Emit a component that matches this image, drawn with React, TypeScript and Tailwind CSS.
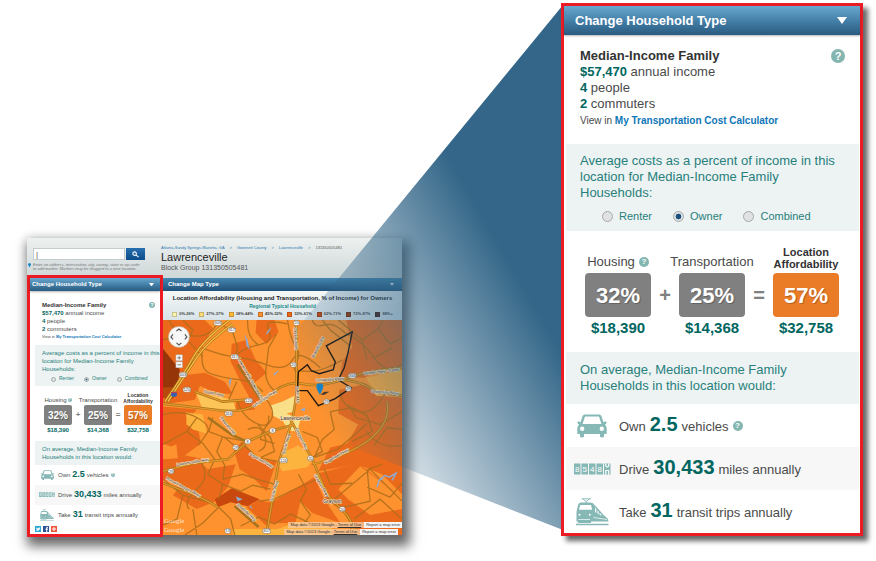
import React from "react";

type Styles = Record<
  | "frame" | "header" | "title" | "caret" | "body" | "info" | "infoText" | "view" | "help" | "smallHelp"
  | "shade" | "para" | "radios" | "radioLabel" | "radio" | "equation" | "labels" | "label" | "strongLabel"
  | "col" | "box" | "op" | "amount" | "shade2" | "row" | "iconCell" | "fact" | "num" | "car" | "odo" | "train",
  string
>;

const large: Styles = {
  frame: "border-[3px] shadow-[5px_5px_5px_rgba(0,0,0,0.6)]",
  header: "h-[29px] pl-[11px] pr-[13px]",
  title: "text-[13px]",
  caret: "w-[10px]",
  body: "pl-[2px] pr-px",
  info: "pt-[13px] pb-[14px] pl-[14px] pr-[14px]",
  infoText: "text-[13px] leading-4",
  view: "text-[10px] leading-[18px]",
  help: "size-[14px] text-[11px] mt-px",
  smallHelp: "size-[10px] text-[8px]",
  shade: "pt-[9px] pb-[7px] pl-[14px]",
  para: "text-[13px] leading-4",
  radios: "mt-[7px] h-4 pl-[22px] gap-[21px]",
  radioLabel: "gap-[6px] text-[11px]",
  radio: "size-[11px] border",
  equation: "pl-[19px] pb-4",
  labels: "h-[42px] pb-[3px]",
  label: "text-[13px] leading-4 gap-1",
  strongLabel: "text-[11px] leading-3",
  col: "w-[66px]",
  box: "h-[44px] w-[66px] rounded-[4px] text-[22px]",
  op: "w-[28px] h-[44px] text-[20px]",
  amount: "mt-[3px] text-[15px] leading-4",
  shade2: "py-[10px] pl-[14px]",
  row: "h-[43px] pl-[6px] gap-[7px]",
  iconCell: "w-10",
  fact: "text-[13px] gap-1",
  num: "text-[20px]",
  car: "w-[30px]",
  odo: "w-[37px]",
  train: "w-[33px]",
};

const small: Styles = {
  frame: "border-[3px]",
  header: "h-[13px] pl-[2px] pr-[6px]",
  title: "text-[6px]",
  caret: "w-[5px]",
  body: "pl-[5px]",
  info: "pt-[10px] pb-1 pl-[7px] pr-[5px]",
  infoText: "text-[6px] leading-[8px]",
  view: "text-[4px] leading-[8px]",
  help: "size-[6px] text-[5px] mt-px",
  smallHelp: "size-[4px] text-[3px]",
  shade: "pt-1 pb-[3px] pl-[7px]",
  para: "text-[6px] leading-[8px]",
  radios: "mt-[2px] h-[8px] pl-[9px] gap-[10px]",
  radioLabel: "gap-[3px] text-[5px]",
  radio: "size-[5px] border",
  equation: "pl-[9px] pb-[7px]",
  labels: "h-[19px] pb-px",
  label: "text-[6px] leading-[8px] gap-px",
  strongLabel: "text-[5px] leading-[6px]",
  col: "w-[28px]",
  box: "h-[20px] w-[28px] rounded-[2px] text-[10px]",
  op: "w-[12px] h-[20px] text-[8px]",
  amount: "mt-px text-[6px] leading-[8px]",
  shade2: "py-1 pl-[7px]",
  row: "h-[20px] pl-1 gap-[3px]",
  iconCell: "w-4",
  fact: "text-[6px] gap-[2px]",
  num: "text-[9px]",
  car: "w-[13px]",
  odo: "w-[16px]",
  train: "w-[14px]",
};

function Help({ className }: { className: string }) {
  return (
    <button
      type="button"
      aria-label="Help"
      className={`flex shrink-0 items-center justify-center rounded-full bg-[#83b5b1] font-bold leading-none text-white ${className}`}
    >
      ?
    </button>
  );
}

function Caret({ className }: { className: string }) {
  return (
    <svg viewBox="0 0 10 7" className={className} aria-hidden="true">
      <path d="M0 0H10L5 7Z" fill="#fff" />
    </svg>
  );
}

function Car({ className }: { className: string }) {
  return (
    <svg viewBox="0 0 30 24" className={className} fill="#86b8b5" aria-hidden="true">
      <path
        fillRule="evenodd"
        d="M8 .5H22Q24 .5 24.6 2.4L26.4 8.3Q27 7.5 28.6 7.6Q30 8 29.6 9.2L28 10.5Q29.7 12.5 29.7 15V20H27V22.5Q26.8 23.6 25 23.6Q23.2 23.6 23 22.5V20H7V22.5Q6.8 23.6 5 23.6Q3.200 23.600 3 22.500V20H.3V15Q.3 12.500 2 10.500L.4 9.200Q0 8 1.400 7.600Q3 7.500 3.600 8.300L5.400 2.400Q6 .5 8 .5ZM8 2.500L5.600 10H24.400L22 2.500ZM5.200 12.500A2.200 2.200 0 1 0 5.200 16.900A2.200 2.200 0 1 0 5.200 12.500ZM24.800 12.500A2.200 2.200 0 1 0 24.800 16.900A2.200 2.200 0 1 0 24.800 12.500Z"
      />
    </svg>
  );
}

function Odometer({ className }: { className: string }) {
  return (
    <svg viewBox="0 0 37 12" className={className} aria-hidden="true">
      {["8", "5", "4", "8"].map((d, i) => (
        <g key={i}>
          <rect x={i * 7.5} y="0.5" width="6.500" height="11" fill="#86b8b5" />
          <text x={i * 7.5 + 3.25} y="9" textAnchor="middle" fontSize="8" fill="#fff" fontFamily="Liberation Sans, sans-serif">
            {d}
          </text>
        </g>
      ))}
      <rect x="30" y="0.5" width="6.500" height="11" fill="#86b8b5" />
      <path d="M31.800.5V3Q33.200 5 34.700 3V.5M31.800 11.500V7.500H34.700V11.500" fill="none" stroke="#fff" strokeWidth="1.200" />
    </svg>
  );
}

function Train({ className }: { className: string }) {
  return (
    <svg viewBox="0 0 33 28" className={className} aria-hidden="true">
      <path d="M5.500 .8H15M7 1L10.200 3.500L13.500 1M10.200 3V5" fill="none" stroke="#86b8b5" strokeWidth=".9" />
      <path d="M5 4.500H14.500Q17.500 4.500 18.500 7L25 14Q27 17 30 19Q32.500 20.500 32.500 23.500H.5V14L1.800 8Q2.300 4.500 5 4.500Z" fill="#86b8b5" />
      <path d="M4.300 7H15L16.200 11.800H2.900Z" fill="#fff" />
      <path d="M19 9.500L20.300 11V14.800L19 14.200ZM21.400 12.200L22.600 13.500V16.200L21.400 15.600ZM23.600 14.600L25.800 17.500L23.600 17Z" fill="#fff" />
      <circle cx="3.500" cy="16.800" r="1" fill="#fff" />
      <circle cx="13.800" cy="16.800" r="1" fill="#fff" />
      <path d="M17.500 19.500L31 21.500M2.500 21.500H14" stroke="#fff" strokeWidth=".7" />
      <path d="M2 23H15V25H2ZM0 25.800H32.500V27.300H0Z" fill="#86b8b5" />
    </svg>
  );
}

function HouseholdPanel({ s, group, social = false }: { s: Styles; group: string; social?: boolean }) {
  const factor = (label: React.ReactNode, value: string, amount: string, accent = false) => (
    <div className={`flex flex-col items-center whitespace-nowrap ${s.col}`}>
      <div className={`flex items-end justify-center ${s.labels}`}>{label}</div>
      <div
        className={`flex items-center justify-center font-bold text-white [text-shadow:1px_1px_1px_rgba(0,0,0,0.25)] ${accent ? "bg-[#ea7c27]" : "bg-[#808080]"} ${s.box}`}
      >
        {value}
      </div>
      <div className={`font-bold text-[#00665f] ${s.amount}`}>{amount}</div>
    </div>
  );
  const operator = (sign: string) => (
    <div className={`flex items-center justify-center self-start font-bold text-[#808080] ${s.op}`}>{sign}</div>
  );
  const fact = (icon: React.ReactNode, before: string, n: string, after: string, shaded = false, help = false) => (
    <li className={`flex items-center ${s.row} ${shaded ? "bg-[#f7f7f7]" : ""}`}>
      <span className={`flex shrink-0 justify-center ${s.iconCell}`}>{icon}</span>
      <span className={`flex items-baseline whitespace-nowrap ${s.fact}`}>
        {before} <b className={`leading-none text-[#00665f] ${s.num}`}>{n}</b> {after}
        {help && (
          <span className="self-center">
            <Help className={s.smallHelp} />
          </span>
        )}
      </span>
    </li>
  );

  return (
    <section className={`border-[#ed1c24] bg-white text-[#4a4a4a] ${s.frame}`}>
      <button
        type="button"
        className={`flex w-full items-center justify-between bg-linear-to-b from-[#6ba8cf] via-[#4480a8] to-[#2b5b80] shadow-[0_1px_2px_rgba(0,0,0,0.3)] ${s.header}`}
      >
        <span className={`whitespace-nowrap font-bold text-white ${s.title}`}>Change Household Type</span>
        <Caret className={s.caret} />
      </button>
      <div className={s.body}>
        <div className={`flex items-start justify-between ${s.info}`}>
          <div className={`whitespace-nowrap ${s.infoText}`}>
            <h2 className="font-bold text-[#333]">Median-Income Family</h2>
            <p><b className="text-[#00665f]">$57,470</b> annual income</p>
            <p><b className="text-[#00665f]">4</b> people</p>
            <p><b className="text-[#00665f]">2</b> commuters</p>
            <p className={s.view}>
              View in <a href="#calculator" className="font-bold text-[#0f76b8]">My Transportation Cost Calculator</a>
            </p>
          </div>
          <Help className={s.help} />
        </div>

        <fieldset className={`bg-[#edf3f3] text-[#27807b] ${s.shade}`}>
          <p className={`whitespace-nowrap ${s.para}`}>
            Average costs as a percent of income in this<br />
            location for Median-Income Family<br />
            Households:
          </p>
          <div className={`flex items-center ${s.radios}`}>
            {["Renter", "Owner", "Combined"].map((name) => (
              <label key={name} className={`flex items-center ${s.radioLabel}`}>
                <input
                  type="radio"
                  name={group}
                  defaultChecked={name === "Owner"}
                  className={`appearance-none rounded-full border-[#a5a9aa] bg-[#dfe1e2] checked:bg-[radial-gradient(circle,#1b4f7c_40%,#dfe1e2_50%)] ${s.radio}`}
                />
                {name}
              </label>
            ))}
          </div>
        </fieldset>

        <div className={`flex items-end ${s.equation}`}>
          {factor(<span className={`flex items-center ${s.label}`}>Housing <Help className={s.smallHelp} /></span>, "32%", "$18,390")}
          <div className="self-start"><div className={s.labels} />{operator("+")}</div>
          {factor(<span className={s.label}>Transportation</span>, "25%", "$14,368")}
          <div className="self-start"><div className={s.labels} />{operator("=")}</div>
          {factor(<span className={`text-center font-bold text-[#333] ${s.strongLabel}`}>Location<br />Affordability</span>, "57%", "$32,758", true)}
        </div>

        <p className={`whitespace-nowrap bg-[#edf3f3] text-[#27807b] ${s.para} ${s.shade2}`}>
          On average, Median-Income Family<br />
          Households in this location would:
        </p>
        <ul>
          {fact(<Car className={s.car} />, "Own", "2.5", "vehicles", false, true)}
          {fact(<Odometer className={s.odo} />, "Drive", "30,433", "miles annually", true)}
          {fact(<Train className={s.train} />, "Take", "31", "transit trips annually")}
        </ul>
        {social && (
          <div className="flex h-[9px] items-center gap-[2px] pb-px">
            <a href="#twitter" aria-label="Twitter" className="block size-[6px] bg-[#29a9d8]">
              <svg viewBox="0 0 6 6"><path d="M1 1.500L3 2.500L4 1.200L5 2Q5 5 1 5L2 4Z" fill="#fff" /></svg>
            </a>
            <a href="#facebook" aria-label="Facebook" className="block size-[6px] bg-[#2d4f94]">
              <svg viewBox="0 0 6 6"><path d="M5 1.300H3.700V6M2.500 3.200H5" stroke="#fff" fill="none" /></svg>
            </a>
            <a href="#share" aria-label="Share" className="block size-[6px] bg-[#f0583a]">
              <svg viewBox="0 0 6 6"><path d="M3 1V5M1 3H5" stroke="#fff" /></svg>
            </a>
          </div>
        )}
      </div>
    </section>
  );
}

const shields: [number, number, string][] = [
  [55, 3, "403"], [69, 10, "317"], [134, 3, "20"], [72, 37, "317"], [20, 55, "403"], [131, 45, "20"],
  [24, 70, "120"], [86, 81, "120"], [66, 94, "316"], [190, 56, "316"], [186, 69, "29"], [164, 82, "29"],
  [110, 111, "8"], [85, 122, "8"], [73, 128, "29"], [121, 141, "124"], [148, 139, "20"], [8, 152, "29"],
  [180, 190, "20"], [65, 212, "13"], [104, 212, "407"],
];

const labels: [number, number, number, string][] = [
  [132, 19, 86, "Old Fountain"], [157, 28, -62, "Braselton Rd"], [87, 60, 60, "Lawrenceville Suwanee Rd"],
  [103, 80, -34, "University Pkwy"], [51, 75, 12, "Duluth Hwy"], [168, 61, -4, "University Pkwy"],
  [220, 53, -7, "Winder Hwy - Cedar"], [223, 74, 5, "University Pkwy"], [134, 75, 89, "Buford Dr"],
  [64, 107, 50, "Pleasant Hill"], [125, 125, -75, "Scenic Hwy"], [138, 120, 65, "Grayson Hwy"],
  [30, 144, -9, "Lawrenceville Hwy"], [98, 142, 30, "Sugarloaf Pkwy"], [20, 169, 28, "Ronald Reagan Pkwy"],
  [113, 172, -75, "Scenic Hwy"], [158, 167, 60, "Grayson Pkwy"], [175, 138, -30, "Sugarloaf Pkwy"],
  [83, 194, 42, "Snellville Hwy"],
];

function AffordabilityMap() {
  return (
    <svg viewBox="0 0 240 216" preserveAspectRatio="none" className="block h-[215px] w-full" role="img" aria-label="Location affordability map">
      <rect width="240" height="216" fill="#fd922f" />
      <g fill="#ea691b">
        <path d="M0 0H42L50 8L39 28L24 46L17 57L0 62Z" />
        <path d="M17 56L42 53L62 62L70 74L55 74L37 66L32 80L0 85V66Z" />
        <path d="M69 24L84 20L93 40L104 53L92 63L98 80L88 80L76 58L68 42Z" />
        <path d="M94 0H112L116 12L104 24L93 13Z" />
        <path d="M74 80L97 77L92 90L72 92Z" />
        <path d="M0 87L34 90L23 102L25 120L8 127L0 124Z" />
        <path d="M184 0H240V50L216 50L202 58L178 57L180 42L190 27Z" />
        <path d="M177 70L204 64L214 76L240 78V175L220 155L195 145L156 152L168 128L185 124L196 105L176 94Z" />
        <path d="M12 110L34 102L38 124L22 136L40 140L35 155L15 140Z" />
        <path d="M0 140L32 138L45 150L73 145L65 168L53 182L34 190L10 176L18 166L0 160Z" />
        <path d="M71 130L80 122L95 140L114 142L104 172L92 160L77 150Z" />
        <path d="M156 154L196 144L240 178V216H195L185 195L163 180Z" />
        <path d="M106 185L152 158L162 180L178 204L150 194L138 182L133 204H102Z" />
        <path d="M84 188L96 181L112 184L104 207Z" />
      </g>
      <path d="M176 170L198 147L240 178V190L208 196L186 180Z" fill="#fd922f" />
      <g fill="#fdb43f">
        <path d="M23 93L40 95L44 114L30 110L24 105Z" />
        <path d="M116 146L120 133L136 126L152 138L145 148L120 152Z" />
        <path d="M70 210H115L135 203L170 208V216H70Z" />
        <path d="M204 58L240 50V76H214Z" fillOpacity=".7" />
      </g>
      <path d="M33 73L52 76L70 80L74 92L55 92L40 90Z" fill="#fdc557" />
      <path d="M108 86L120 82L132 76V92L124 94L138 100L135 112L126 111L120 101L110 96Z" fill="#f9df87" />
      <path d="M0 29L17 50L14 68L0 68Z" fill="#963608" />
      <path d="M0 68L14 68L10 79L0 78Z" fill="#b64a0c" />
      <path d="M52 180L69 169L97 180L85 187L68 183L55 188Z" fill="#c9480d" />
      <g fill="none" stroke="#b06f1c" strokeWidth="1.300" opacity=".9">
        <path d="M0 20Q20 14 30 26T40 36M6 0Q12 14 30 16T55 2M20 0L30 10L24 22M39 28Q60 36 72 37T104 45T130 40T158 48" />
        <path d="M72 37Q80 28 96 25T106 10T125 4M104 45L106 28L114 14M104 45Q100 62 113 72M40 28Q36 50 48 54T76 60T100 72" />
        <path d="M56 3L70 12L75 28L72 40M85 0Q84 18 96 25M125 0Q128 20 134 28T131 46L136 60" />
        <path d="M150 0Q152 8 162 5T184 14Q200 20 212 38T240 44M160 0L168 10L188 26M176 0L200 20L216 9L221 0M200 20L205 40M216 9L228 24L240 18M212 38L230 28" />
        <path d="M134 50Q150 54 164 48T180 40M104 80Q115 94 106 104T98 120L112 124M74 80Q80 98 94 104T106 96M0 95Q20 90 34 98T45 112T35 126" />
        <path d="M50 98L46 112L62 118L74 128M34 98L24 112L0 125M24 112L40 124L52 140L45 155L60 165L56 180" />
        <path d="M60 117L54 132L62 146L60 160L80 155L95 160L112 165M95 105L108 118L112 132L94 140M78 123L95 138L115 142" />
        <path d="M140 112L155 118L160 132L150 138M168 92L172 110L160 120L152 138M152 138L175 130L196 112L205 104M186 85L194 98L218 105L240 92" />
        <path d="M168 92L190 88L205 96L210 112L190 122M212 126L225 108L240 110M178 72Q180 88 196 92T225 70M205 112Q216 130 240 126" />
        <path d="M0 160L20 176L50 184M20 176L14 200L0 206M30 190L34 216M56 188L68 200L72 216M56 188L40 204L22 216M96 182L112 180L132 170L155 160M112 180L106 192" />
        <path d="M136 155L144 170L138 182L148 196L140 206M60 165L78 172L90 166L108 170M166 185L190 165L208 150L240 182M205 168L228 178L240 164M205 150L208 182L182 188M192 200L218 180L240 200M180 190L190 206L186 216" />
        <path d="M38 142Q48 158 34 170T26 190M78 207L96 198L112 205L128 195L148 204M85 110Q98 104 102 116T96 132M74 62L66 80M62 118L84 122M162 150L168 165L190 164M220 145L206 150" />
      </g>
      <g fill="none" stroke="#a7731e" strokeWidth="2.600">
        <path d="M67 0Q40 20 30 38T2 82M70 4Q44 22 33 39T5 82" />
        <path d="M0 84L50 90Q85 96 104 78T140 64T180 60T220 50L240 48M180 60Q202 62 214 72L240 76M225 82Q228 98 216 112T178 136T150 144" />
        <path d="M134 0V76L130 100L116 144L104 215M128 100L150 140L165 176L185 196L196 216" />
        <path d="M0 152L30 144L65 140L85 122L110 111L132 105M0 164L28 174L45 182L55 188M32 72L60 82L85 80M45 98L70 116L84 122M75 45L98 80M72 187L96 208" />
      </g>
      <g fill="none" stroke="#e79a2c" strokeWidth="1.200">
        <path d="M67 0Q40 20 30 38T2 82M70 4Q44 22 33 39T5 82" stroke="#ffc042" />
        <path d="M0 84L50 90Q85 96 104 78T140 64T180 60T220 50L240 48M180 60Q202 62 214 72L240 76M225 82Q228 98 216 112T178 136T150 144" />
        <path d="M134 0V76L130 100L116 144L104 215M128 100L150 140L165 176L185 196L196 216" />
        <path d="M0 152L30 144L65 140L85 122L110 111L132 105M0 164L28 174L45 182L55 188M32 72L60 82L85 80" />
      </g>
      <g fill="#8fa9d0">
        <path d="M104 12L109 7L107 11L104 15ZM82 14L85 20L87 30L84 26ZM66 61L69 58L67 68ZM111 54L117 50L112 56ZM73 177L80 180L75 182ZM138 90L143 88L142 92ZM88 186L90 190L87 188Z" />
        <path d="M215 168L217 161L221 159M217 161L223 156L227 158L234 154L230 161" fill="none" stroke="#8fa9d0" strokeWidth="1.500" />
      </g>
      <path d="M190 12L164 26L173 42L171 50L157 54L149 51L145 45L136 52L135 71L145 71L156 86L173 79L189 68L176 60L182 48L186 32Z" fill="none" stroke="#20170f" strokeWidth="1.400" />
      <g fontFamily="Liberation Sans, sans-serif" fontSize="4" textAnchor="middle" fill="#38281a" stroke="#f8e4c8" strokeWidth="1" paintOrder="stroke">
        {labels.map(([x, y, r, t], i) => (
          <text key={i} x={x} y={y} transform={`rotate(${r} ${x} ${y})`}>{t}</text>
        ))}
        <text x="133" y="100" fontSize="5">Lawrenceville</text>
        <text x="170" y="184" fontSize="5">Grayson</text>
      </g>
      {shields.map(([x, y, t], i) => (
        <g key={i}>
          <rect x={x - (t.length > 2 ? 4 : 3)} y={y - 2.5} width={t.length > 2 ? 8 : 6} height="5" rx="2.200" fill="#fff" stroke="#78603c" strokeWidth=".5" />
          <text x={x} y={y + 1.5} textAnchor="middle" fontSize="4" fontFamily="Liberation Sans, sans-serif" fill="#333">{t}</text>
        </g>
      ))}
      <rect x="8" y="72" width="6" height="5" rx="2" fill="#2f62b5" />
      <path d="M8 73H14" stroke="#d33" />
      <path d="M158 75L162 72H167L162 75Z" fill="#4b3526" />
      <path d="M157.500 75Q154 69 154 67A3.500 3.500 0 1 1 161 67Q161 69 157.500 75Z" fill="#1683c8" />
      <circle cx="16" cy="17" r="10.500" fill="#f7f7f7" stroke="#c8b8a8" strokeWidth=".7" />
      <path d="M13.500 11L16 9L18.500 11M13.500 23L16 25L18.500 23M10 14.500L8 17L10 19.500M22 14.500L24 17L22 19.500" fill="none" stroke="#555" strokeWidth="1.200" />
      <rect x="13" y="35" width="6.500" height="6" fill="#f8f8f8" stroke="#aaa" strokeWidth=".5" />
      <rect x="13" y="42" width="6.500" height="6" fill="#f8f8f8" stroke="#aaa" strokeWidth=".5" />
      <path d="M14.500 38H18M16.250 36.300V39.700M14.500 45H18" stroke="#666" strokeWidth=".8" />
      <g fontFamily="Liberation Serif, serif" fontSize="7" fill="#fff" fillOpacity=".8">
        <text x="1" y="204">Google</text>
        <text x="1" y="213">Google</text>
      </g>
    </svg>
  );
}

const legend = [
  ["0%-26%", "bg-[#fdf3b0]"],
  ["27%-37%", "bg-[#fbdc7c]"],
  ["38%-44%", "bg-[#fdbb3a]"],
  ["45%-52%", "bg-[#fd922f]"],
  ["53%-61%", "bg-[#ea691b]"],
  ["62%-71%", "bg-[#c9480d]"],
  ["72%-87%", "bg-[#963608]"],
  ["88%+", "bg-[#4c1c10]"],
];

function Attribution({ inset }: { inset: string }) {
  return (
    <p className={`flex h-[7px] items-center justify-end whitespace-nowrap text-[4px] leading-none text-[#333] ${inset}`}>
      <span className="bg-[#f6c9a0]/80 px-[3px] py-px">
        Map data ©2013 Google - <a href="#terms" className="underline">Terms of Use</a>
      </span>
      <a href="#report" className="bg-[#f4f4f4] px-[2px] py-px">Report a map error</a>
    </p>
  );
}

function MapWindow() {
  return (
    <div className="mt-[238px] self-start bg-[#e3e9e9] shadow-[4px_7px_11px_4px_rgba(0,0,0,0.6)]">
      <header className="flex h-10 justify-between bg-linear-to-b from-[#edf1f0] to-[#cfd7d8]">
        <form className="w-[134px] shrink-0 pt-[10px] pl-[6px]" onSubmit={(e) => e.preventDefault()}>
          <div className="flex gap-px">
            <input aria-label="Address" defaultValue="|" className="h-[12px] w-[92px] border border-[#c4cccd] bg-white px-[2px] text-[8px] leading-none text-[#555]" />
            <button type="submit" aria-label="Search" className="flex h-[12px] w-[19px] items-center justify-center bg-linear-to-b from-[#286fae] to-[#0c4c8a]">
              <svg viewBox="0 0 8 8" className="w-[7px]" fill="none" stroke="#fff" strokeWidth="1.200">
                <circle cx="3" cy="3" r="2" />
                <path d="M4.500 4.500L7.500 7" />
              </svg>
            </button>
          </div>
          <div className="mt-[3px] flex items-start gap-[2px]">
            <svg viewBox="0 0 4 6" className="-ml-[5px] w-[3px] shrink-0"><path d="M2 6L0 2A2 2 0 0 1 4 2Z" fill="#1683c8" /></svg>
            <p className="whitespace-nowrap text-[4px] italic leading-[4px] text-[#777]">
              Enter an address, intersection, city, county, state or zip code<br />
              to add marker. Markers may be dragged to a new location.
            </p>
          </div>
        </form>
        <div className="flex-1 whitespace-nowrap pt-[7px]">
          <nav className="flex gap-[5px] text-[4px] leading-[6px] text-[#2b7ab0]">
            <a href="#metro">Atlanta-Sandy Springs-Marietta, GA</a><span>&gt;</span>
            <a href="#county">Gwinnett County</a><span>&gt;</span>
            <a href="#city">Lawrenceville</a><span>&gt;</span>
            <span className="text-[#555]">131350505481</span>
          </nav>
          <h1 className="text-[11px] leading-[13px] text-[#222]">Lawrenceville</h1>
          <p className="text-[7px] leading-[8px] text-[#555]">Block Group 131350505481</p>
        </div>
      </header>
      <div className="flex">
        <div className="relative -mt-[3px] -mb-[2px] w-[136px] shrink-0">
          <HouseholdPanel s={small} group="tenure-overview" social />
        </div>
        <div className="min-w-0 flex-1">
          <button type="button" className="flex h-[13px] w-full items-center justify-between bg-linear-to-b from-[#4688b2] to-[#215179] pr-[8px] pl-[5px]">
            <span className="text-[6px] font-bold text-white">Change Map Type</span>
            <Caret className="w-[4px]" />
          </button>
          <div className="flex h-[29px] flex-col items-center whitespace-nowrap bg-linear-to-b from-[#f4f7f7] to-[#d8e3e9] pt-[3px]">
            <h2 className="text-[6px] font-bold leading-[9px] text-[#222]">Location Affordability (Housing and Transportation, % of Income) for Owners</h2>
            <p className="text-[5px] leading-[6px] font-bold text-[#1b8a88]">Regional Typical Household</p>
            <ul className="flex gap-[5px] pt-px text-[4px] font-bold leading-[8px] text-[#444]">
              {legend.map(([name, color]) => (
                <li key={name} className="flex items-center gap-[2px]">
                  <span className={`size-[5px] border border-black/20 ${color}`} />
                  {name}
                </li>
              ))}
            </ul>
          </div>
          <div className="relative">
            <AffordabilityMap />
            <div className="absolute right-0 bottom-0">
              <Attribution inset="pr-0" />
              <Attribution inset="pr-[4px]" />
            </div>
          </div>
        </div>
      </div>
    </div>
  );
}

export default function App() {
  return (
    <main className="relative grid min-h-screen grid-cols-[375fr_159fr_302fr] overflow-hidden bg-white pr-[13px] pl-[27px] font-['Liberation_Sans',Arial,sans-serif]">
      <MapWindow />
      <svg viewBox="0 0 876 561" preserveAspectRatio="none" className="pointer-events-none absolute inset-0 h-full w-full" aria-hidden="true">
        <defs>
          <linearGradient id="beam" gradientUnits="userSpaceOnUse" x1="310" y1="397" x2="518" y2="277">
            <stop offset="0" stopColor="#336688" stopOpacity="0" />
            <stop offset="1" stopColor="#336688" />
          </linearGradient>
        </defs>
        <path d="M563 5L288 340V422L563 530Z" fill="url(#beam)" />
      </svg>
      <div className="relative col-start-3 mt-[3px] self-start">
        <HouseholdPanel s={large} group="tenure-detail" />
      </div>
    </main>
  );
}
